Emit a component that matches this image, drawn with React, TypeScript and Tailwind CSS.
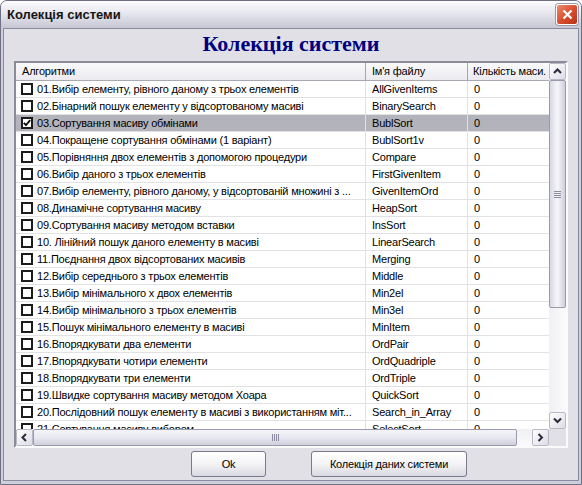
const rows: [string, string][] = [
  ["01.Вибір елементу, рівного даному з трьох елементів", "AllGivenItems"],
  ["02.Бінарний пошук елементу у відсортованому масиві", "BinarySearch"],
  ["03.Сортування масиву обмінами", "BublSort"],
  ["04.Покращене сортування обмінами (1 варіант)", "BublSort1v"],
  ["05.Порівняння двох елементів з допомогою процедури", "Compare"],
  ["06.Вибір даного з трьох елементів", "FirstGivenItem"],
  ["07.Вибір елементу, рівного даному, у відсортованій множині з ...", "GivenItemOrd"],
  ["08.Динамічне сортування масиву", "HeapSort"],
  ["09.Сортування масиву методом вставки", "InsSort"],
  ["10. Лінійний пошук даного елементу в масиві", "LinearSearch"],
  ["11.Поєднання двох відсортованих масивів", "Merging"],
  ["12.Вибір середнього з трьох елементів", "Middle"],
  ["13.Вибір мінімального х двох елементів", "Min2el"],
  ["14.Вибір мінімального з трьох елементів", "Min3el"],
  ["15.Пошук мінімального елементу в масиві", "MinItem"],
  ["16.Впорядкувати два елементи", "OrdPair"],
  ["17.Впорядкувати чотири елементи", "OrdQuadriple"],
  ["18.Впорядкувати три елементи", "OrdTriple"],
  ["19.Швидке сортування масиву методом Хоара", "QuickSort"],
  ["20.Послідовний пошук елементу в масиві з використанням міт...", "Search_in_Array"],
  ["21.Сортування масиву вибором", "SelectSort"],
];

const Chevron = ({ dir }: { dir: "up" | "down" | "left" | "right" }) => {
  const d = {
    up: "M1 5 L4.5 1.5 L8 5",
    down: "M1 1.5 L4.5 5 L8 1.5",
    left: "M5 1 L1.5 4.5 L5 8",
    right: "M1.5 1 L5 4.5 L1.5 8",
  }[dir];
  const vertical = dir === "up" || dir === "down";
  return (
    <svg width={vertical ? 9 : 7} height={vertical ? 7 : 9} viewBox={vertical ? "0 0 9 7" : "0 0 7 9"}>
      <path d={d} fill="none" stroke="#2a2a3a" strokeWidth="2" />
    </svg>
  );
};

const ArrowButton = ({ dir }: { dir: "up" | "down" | "left" | "right" }) => (
  <div className="w-[17px] h-[17px] shrink-0 rounded-[2px] border border-[#b8b8c8] bg-gradient-to-br from-white to-[#dcdce6] flex items-center justify-center">
    <Chevron dir={dir} />
  </div>
);

const Checkbox = ({ checked }: { checked: boolean }) => (
  <div className="w-[12px] h-[12px] shrink-0 border-2 border-[#1c1c1c] bg-white flex items-center justify-center">
    {checked && (
      <svg width="8" height="8" viewBox="0 0 8 8">
        <path d="M0.8 3.8 L3 6.2 L7.2 1.2" fill="none" stroke="#111" strokeWidth="1.8" />
      </svg>
    )}
  </div>
);

const Button = ({ label, className }: { label: string; className: string }) => (
  <div
    className={`h-[26px] rounded-[3px] border border-[#7a7a8e] bg-gradient-to-b from-white via-[#f4f4f6] to-[#d8d8e0] flex items-center justify-center text-[11px] text-black ${className}`}
  >
    {label}
  </div>
);

export default function App() {
  return (
    <div className="w-[582px] h-[485px] flex flex-col bg-[#cfcfdb] border border-[#6e6e84] rounded-t-[7px] overflow-hidden font-['Liberation_Sans',Arial,sans-serif] text-[11px] tracking-[-0.2px] text-black">
      {/* title bar */}
      <div className="h-[27px] shrink-0 flex items-center pl-[6px] pr-[3px] bg-gradient-to-b from-[#fdfdfe] via-[#e4e4ec] to-[#c6c6d4]">
        <span className="font-bold text-[13px] tracking-normal text-[#141414] flex-1">Колекція системи</span>
        <div className="w-[22px] h-[21px] rounded-[3px] border border-white bg-gradient-to-br from-[#ec8a70] via-[#d9502f] to-[#b8321a] flex items-center justify-center shadow-[0_0_0_1px_#9a9aae]">
          <svg width="11" height="11" viewBox="0 0 11 11">
            <path d="M1.5 1.5 L9.5 9.5 M9.5 1.5 L1.5 9.5" stroke="white" strokeWidth="2.2" />
          </svg>
        </div>
      </div>

      {/* client area */}
      <div className="flex-1 mx-[2px] mb-[3px] bg-[#e1e0e6] border border-[#8a8aa0] flex flex-col">
        <div className="h-[32px] shrink-0 flex items-center justify-center pb-[2px]">
          <span className="font-['Liberation_Serif',serif] font-bold text-[22px] tracking-normal leading-none text-[#00007f]">
            Колекція системи
          </span>
        </div>

        {/* list view */}
        <div className="ml-[10px] w-[554px] h-[387px] shrink-0 border-2 border-t-[#8c8c99] border-l-[#8c8c99] border-b-[#fbfbfb] border-r-[#fbfbfb] flex flex-col">
          <div className="flex flex-1 min-h-0">
            <div className="w-[533px] flex flex-col bg-white overflow-hidden">
              <div className="h-[18px] shrink-0 flex bg-gradient-to-b from-[#fafafb] to-[#ebeaef] border-b border-[#a9a9b3]">
                <div className="w-[350px] pl-[6px] flex items-center border-r border-[#a6a6b0]">Алгоритми</div>
                <div className="w-[102px] pl-[6px] flex items-center border-r border-[#a6a6b0]">Ім'я файлу</div>
                <div className="flex-1 pl-[5px] flex items-center whitespace-nowrap overflow-hidden">Кількість маси.</div>
              </div>
              <div className="flex-1 overflow-hidden">
                {rows.map(([name, file], i) => (
                  <div
                    key={file}
                    className={`h-[17px] flex border-b border-[#e2e2e4] ${i === 2 ? "bg-[#b3b3bc]" : ""}`}
                  >
                    <div className="w-[350px] pl-[5px] flex items-center gap-[4px] border-r border-[#e2e2e4] whitespace-nowrap overflow-hidden">
                      <Checkbox checked={i === 2} />
                      <span>{name}</span>
                    </div>
                    <div className="w-[102px] pl-[6px] flex items-center border-r border-[#e2e2e4] whitespace-nowrap overflow-hidden">
                      {file}
                    </div>
                    <div className="flex-1 pl-[6px] flex items-center">0</div>
                  </div>
                ))}
              </div>
            </div>

            {/* vertical scrollbar */}
            <div className="w-[17px] flex flex-col bg-gradient-to-r from-[#f0f0f4] to-[#fbfbfd]">
              <ArrowButton dir="up" />
              <div className="h-[228px] shrink-0 rounded-[2px] border border-[#9a9aae] bg-gradient-to-r from-[#d8d8e4] via-[#f6f6fa] to-[#cfcfdc] flex flex-col items-center justify-center gap-[1px]">
                {[0, 1, 2, 3].map((k) => (
                  <div key={k} className="w-[7px] h-[1px] bg-[#8c8ca0]" />
                ))}
              </div>
              <div className="flex-1" />
              <ArrowButton dir="down" />
            </div>
          </div>

          {/* horizontal scrollbar */}
          <div className="h-[17px] shrink-0 flex">
            <div className="w-[533px] flex bg-gradient-to-b from-[#f0f0f4] to-[#fbfbfd]">
              <ArrowButton dir="left" />
              <div className="w-[484px] shrink-0 rounded-[2px] border border-[#9a9aae] bg-gradient-to-b from-[#f4f4f8] via-[#e8e8f0] to-[#cfcfdc] flex items-center justify-center gap-[1px]">
                {[0, 1, 2, 3].map((k) => (
                  <div key={k} className="w-[1px] h-[7px] bg-[#8c8ca0]" />
                ))}
              </div>
              <div className="flex-1" />
              <ArrowButton dir="right" />
            </div>
            <div className="flex-1 bg-[#e1e0e6]" />
          </div>
        </div>

        {/* buttons */}
        <div className="flex mt-[3px] pl-[187px] gap-[45px]">
          <Button label="Ok" className="w-[75px]" />
          <Button label="Колекція даних системи" className="w-[156px]" />
        </div>
      </div>
    </div>
  );
}
